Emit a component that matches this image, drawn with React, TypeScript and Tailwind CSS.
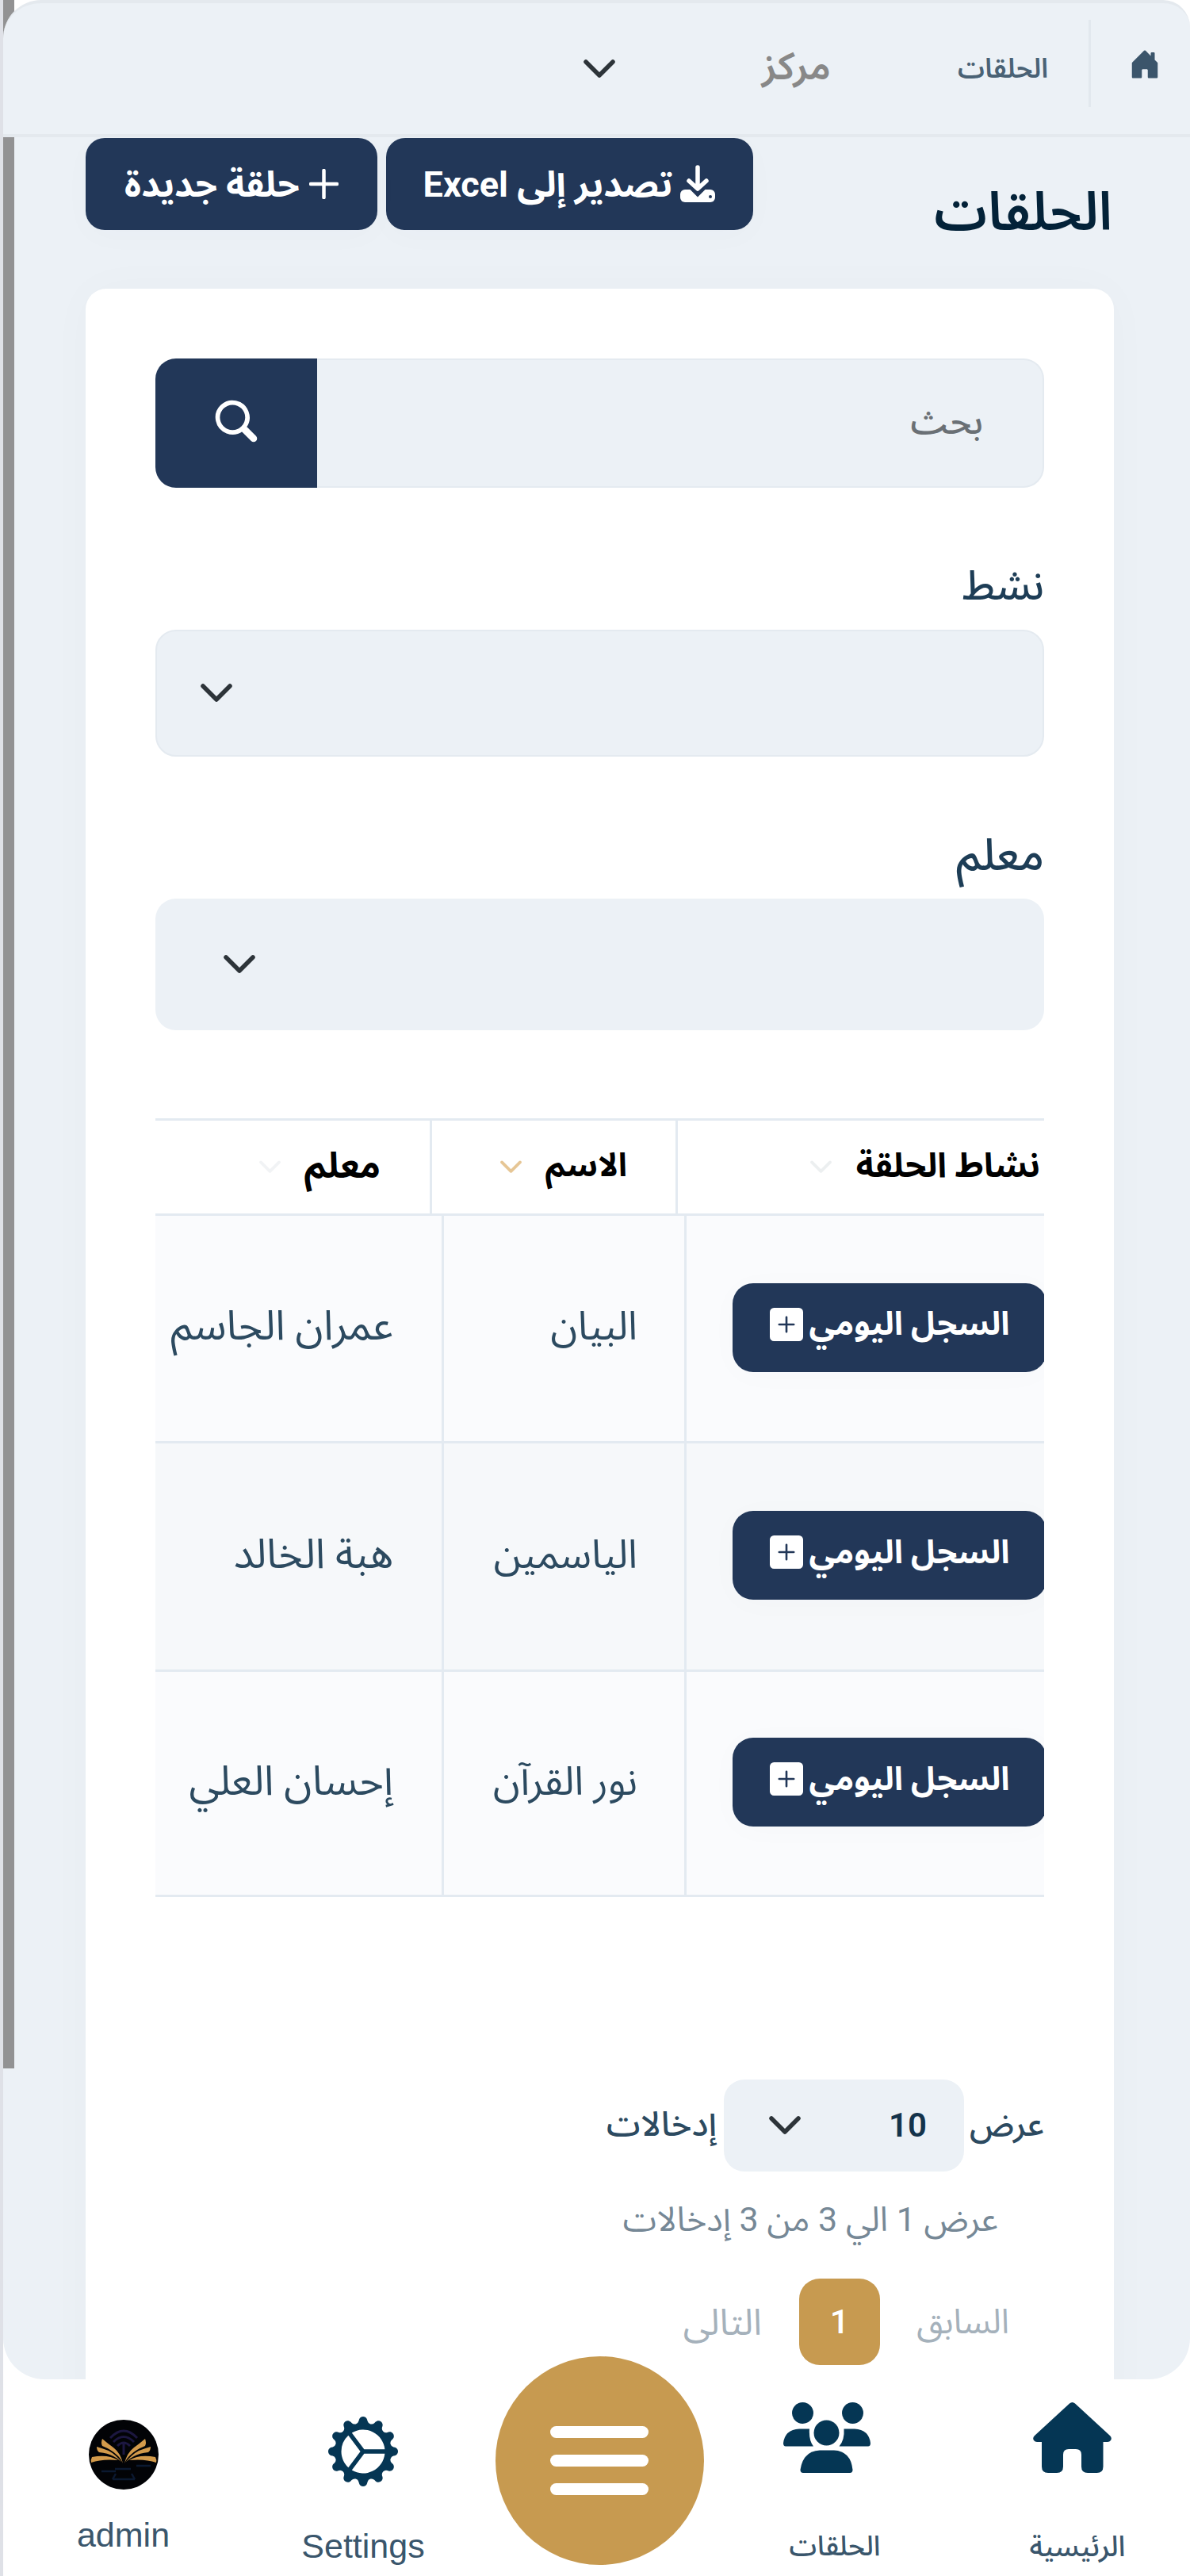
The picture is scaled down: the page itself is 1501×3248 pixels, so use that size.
import React from 'react';
import { BsHouseDoorFill, BsSearch, BsPlusSquareFill, BsGearWideConnected } from 'react-icons/bs';

interface Circle {
  name: string;
  teacher: string;
}

const circles: Circle[] = [
  { name: 'البيان', teacher: 'عمران الجاسم' },
  { name: 'الياسمين', teacher: 'هبة الخالد' },
  { name: 'نور القرآن', teacher: 'إحسان العلي' },
];

const rowStyles = ['h-[287px] bg-[#fafbfd]', 'h-[288px] bg-[#f6f8fa]', 'h-[284px] bg-[#fafbfd]'];

function Chevron({ className = '' }: { className?: string }) {
  return (
    <svg viewBox="0 0 40 24" fill="none" stroke="currentColor" className={className}>
      <path d="M3 3l17 17L37 3" strokeWidth="5.5" strokeLinecap="round" strokeLinejoin="round" />
    </svg>
  );
}

function DownloadIcon() {
  return (
    <svg viewBox="0 0 46 48" className="w-[46px] h-[48px] shrink-0" fill="none" strokeLinecap="round">
      <rect x="1" y="31" width="44" height="16" rx="6" fill="currentColor" />
      <path d="M12 21l11 11 11-11" stroke="#223758" strokeWidth="12" />
      <path d="M23 3v25M12 20l11 10 11-10" stroke="currentColor" strokeWidth="5.500" strokeLinejoin="round" />
      <circle cx="39" cy="40" r="2" fill="#223758" />
    </svg>
  );
}

function PlusIcon() {
  return (
    <svg viewBox="0 0 37 38" className="w-[37px] h-[38px] shrink-0" stroke="currentColor">
      <path d="M18.500 2v34M2 19h33" strokeWidth="4.500" strokeLinecap="round" />
    </svg>
  );
}

function HomeIcon() {
  return (
    <svg viewBox="0 0 99 89" className="w-[99px] h-[89px]" fill="currentColor">
      <path d="M46 1.500q3.500-3 7 0L97 42q3 3 1 6-1.500 2-4 2h-5.500v31q0 8-8 8H69q-8 0-8-8V66q0-7-7-7h-9q-7 0-7 7v15q0 8-8 8H19q-8 0-8-8V50H5q-2.500 0-4-2-2-3 1-6z" />
    </svg>
  );
}

function GroupIcon() {
  return (
    <svg viewBox="0 0 110 89" className="w-[110px] h-[89px]" fill="currentColor">
      <circle cx="24.500" cy="13.500" r="13.500" />
      <circle cx="87.500" cy="13.500" r="13.500" />
      <circle cx="54.500" cy="38.500" r="16" />
      <path d="M20 33.500h13q-1 14 5 22H3q-3 0-3-4 2-17 20-18z" />
      <path d="M90 33.500H76.500q1 14-6 22H107q3 0 3-4-2-17-20-18z" />
      <path d="M46 60.500h18q21 1 23.500 24.500 0 4-3.500 4H25q-3.500 0-3.500-4Q25 61.500 46 60.500z" />
    </svg>
  );
}

function Avatar() {
  return (
    <svg viewBox="0 0 88 88" className="w-[88px] h-[88px]">
      <circle cx="44" cy="44" r="44" fill="#020306" />
      <path d="M27 23q17-18 34 0M31 28q13-13 26 0M36 33q8-8 16 0M44 28v16" stroke="#1c1740" strokeWidth="3" fill="none" />
      {/* Open book pages */}
      <g fill="#d39a4b">
        <path d="M43 55Q40 42 31 35 24 30 17 24q-2 5 0 9 12 5 18 11 5 4 8 11z" />
        <path d="M41 53Q34 44 25 39 17 36 10 34q0 5 3 7 11 1 18 5 6 3 10 7z" />
        <path d="M37 51Q24 43 4 47q-2 4-1 7 14-5 34-3z" />
        <path d="M45 55Q48 42 57 35 64 30 71 24q2 5 0 9-12 5-18 11-5 4-8 11z" />
        <path d="M47 53Q54 44 63 39 71 36 78 34q0 5-3 7-11 1-18 5-6 3-10 7z" />
        <path d="M51 51Q64 43 84 47q2 4 1 7-14-5-34-3z" />
      </g>
      <path d="M16 65h18M60 58h18M33 62h20M30 75h28M34 68l-4 7M54 68l4 7" stroke="#0b1930" strokeWidth="2.500" fill="none" />
    </svg>
  );
}

function Header() {
  return (
    <header className="relative z-10 flex items-center h-[173px] pr-[39px] bg-[#ecf1f6] border-t-4 border-b-4 border-[#e4e9ee] rounded-tl-[48px] rounded-tr-[34px]">
      <BsHouseDoorFill className="w-[40px] h-[42px] -mx-[2px] mb-[12px] text-[#3b556b]" />
      <div className="w-[3px] h-[110px] mr-[50px] mb-[14px] bg-[#e2e8ee]" />
      <span className="w-[112px] mr-[51px] mb-[2px] text-[34px] leading-none font-semibold text-[#4a6275] whitespace-nowrap">الحلقات</span>
      <span className="w-[90px] mr-[162px] mb-[6px] text-[48px] leading-none font-semibold text-[#888] whitespace-nowrap">مركز</span>
      <Chevron className="w-[40px] h-[24px] mr-[182px] text-[#2d3439]" />
    </header>
  );
}

function PageTitle() {
  return (
    <div className="flex items-start justify-between h-[191px] pt-px">
      <h1 className="pt-[53px] pr-[2px] text-[67px] leading-[80px] font-semibold text-[#032238]">الحلقات</h1>
      <div className="flex gap-[11px] text-[45px] leading-none font-bold text-white whitespace-nowrap">
        <button className="flex items-center justify-center gap-[9px] w-[463px] h-[116px] bg-[#223758] rounded-[24px] shadow-[0_8px_40px_rgba(34,55,88,0.02)]">
          <DownloadIcon />
          <span>تصدير إلى Excel</span>
        </button>
        <button className="flex items-center justify-center gap-[12px] w-[368px] h-[116px] bg-[#223758] rounded-[24px] shadow-[0_8px_40px_rgba(34,55,88,0.02)]">
          <PlusIcon />
          <span>حلقة جديدة</span>
        </button>
      </div>
    </div>
  );
}

function Filters() {
  return (
    <div>
      <div className="flex h-[163px]">
        <div className="flex-1 flex items-center pr-[75px] pb-[4px] bg-[#ecf1f6] border-2 border-l-0 border-[#e4eaf0] rounded-r-[26px] text-[45px] leading-none font-medium text-[#6a7075]">
          بحث
        </div>
        <button className="flex items-center justify-center w-[204px] bg-[#223758] rounded-l-[26px] text-white">
          <BsSearch className="w-[50px] h-[50px] mb-[6px] overflow-visible stroke-current [stroke-width:0.8]" />
        </button>
      </div>

      <label className="block mt-[96px] mb-[27px] text-[51px] leading-[56px] font-medium text-[#1d3d56]">نشط</label>
      <div className="flex items-center justify-end h-[160px] pl-[55px] bg-[#ecf1f6] border-2 border-[#e4eaf0] rounded-[26px]">
        <Chevron className="w-[40px] h-[24px] text-[#2d3439]" />
      </div>

      <label className="block mt-[96px] mb-[27px] text-[56px] leading-[56px] font-medium text-[#1d3d56]">معلم</label>
      <div className="flex items-center justify-end h-[166px] pl-[86px] bg-[#ecf1f6] rounded-[26px]">
        <Chevron className="w-[40px] h-[24px] text-[#2d3439]" />
      </div>
    </div>
  );
}

function CirclesTable() {
  return (
    <div className="mt-[111px] overflow-hidden">
      {/* Column heads */}
      <div className="flex h-[123px] border-y-[3px] border-[#e3eaf1] text-[43px] leading-none font-bold text-black whitespace-nowrap">
        <div className="flex items-center w-[465px] pr-[5px] gap-[31px] border-l-[3px] border-[#e3eaf1]">
          <span className="mb-[5px]">نشاط الحلقة</span>
          <Chevron className="w-[27px] h-[17px] text-[#eceff0]" />
        </div>
        <div className="flex items-center w-[310px] pr-[61px] gap-[30px] border-l-[3px] border-[#e3eaf1]">
          <span className="mb-[5px] text-[41px]">الاسم</span>
          <Chevron className="w-[27px] h-[17px] text-[#e6c695]" />
        </div>
        <div className="flex items-center flex-1 pr-[62px] gap-[30px]">
          <span className="mb-[5px] text-[45px]">معلم</span>
          <Chevron className="w-[27px] h-[17px] text-[#f1f3f5]" />
        </div>
      </div>

      {circles.map((circle, index) => (
        <div key={circle.name} className={`flex border-b-[3px] border-[#e3eaf1] whitespace-nowrap leading-none text-[#2c4a60] ${rowStyles[index]}`}>
          <div className="flex items-center w-[454px] pb-[3px] border-l-[3px] border-[#e3eaf1]">
            <button className="flex items-center justify-center gap-[8px] shrink-0 w-[396px] h-[112px] -mr-[3px] pb-[8px] bg-[#223758] rounded-[26px] text-[41px] font-bold text-white shadow-[0_4px_40px_rgba(34,55,88,0.02)]">
              <span>السجل اليومي</span>
              <BsPlusSquareFill className="w-[42px] h-[42px]" />
            </button>
          </div>
          <div className="flex items-center w-[306px] pr-[59px] pb-[6px] border-l-[3px] border-[#e3eaf1] text-[50px]">{circle.name}</div>
          <div className="flex items-center flex-1 pr-[61px] pb-[6px] text-[52px]">{circle.teacher}</div>
        </div>
      ))}
    </div>
  );
}

function TableFooter() {
  return (
    <div className="mt-[230px] text-[43px] leading-none whitespace-nowrap">
      <div className="flex items-center h-[116px] text-[#2c4a60]">
        <span className="w-[90px] mb-[3px] text-[42px] font-medium">عرض</span>
        <div className="flex items-center justify-between w-[303px] h-[116px] mr-[11px] pr-[47px] pl-[57px] bg-[#ecf1f6] rounded-[26px]">
          <span className="text-[42px] font-semibold text-[#14334b]">10</span>
          <Chevron className="w-[40px] h-[24px] text-[#2d3439]" />
        </div>
        <span className="mr-[9px] mb-[3px] font-medium">إدخالات</span>
      </div>

      <div className="mt-[30px] mb-[45px] pr-[58px] leading-[60px] text-[#768896]">عرض 1 الي 3 من 3 إدخالات</div>

      {/* Pagination */}
      <div className="flex items-center pr-[44px] text-[#a5b1bb]">
        <span className="w-[117px]">السابق</span>
        <span className="flex items-center justify-center w-[102px] h-[109px] mr-[46px] bg-[#c79a50] rounded-[26px] font-medium text-white">1</span>
        <span className="mr-[47px] text-[46px]">التالى</span>
      </div>
    </div>
  );
}

function BottomNav() {
  return (
    <nav className="grid grid-cols-[298px_300px_294px_302px_303px] h-[248px] leading-none font-medium text-[#3a566c] whitespace-nowrap">
      <div className="flex flex-col items-center pt-[29px]">
        <span className="text-[#053654]"><HomeIcon /></span>
        <span className="mt-[75px] mr-[-14px] text-[36px]">الرئيسية</span>
      </div>
      <div className="flex flex-col items-center pt-[29px] pr-[20px]">
        <span className="text-[#053654]"><GroupIcon /></span>
        <span className="mt-[75px] mr-[-20px] text-[35px]">الحلقات</span>
      </div>
      <div className="flex justify-center">
        <button className="relative z-10 flex flex-col items-center justify-center gap-[21px] shrink-0 w-[263px] h-[263px] -mt-[29px] bg-[#c79a50] rounded-full">
          <span className="w-[124px] h-[15px] bg-white rounded-full" />
          <span className="w-[124px] h-[15px] bg-white rounded-full" />
          <span className="w-[124px] h-[15px] bg-white rounded-full" />
        </button>
      </div>
      <div className="flex flex-col items-center pt-[47px] font-['Liberation_Sans'] font-normal">
        <BsGearWideConnected className="w-[88px] h-[88px] text-[#053654]" />
        <span className="mt-[54px] text-[43px]">Settings</span>
      </div>
      <div className="flex flex-col items-center pt-[51px] font-['Liberation_Sans'] font-normal">
        <Avatar />
        <span className="mt-[36px] text-[43px]">admin</span>
      </div>
    </nav>
  );
}

function App() {
  return (
    <div
      dir="rtl"
      className="relative w-[1501px] h-[3248px] overflow-hidden bg-white border-l-4 border-[#dfe1e7] font-[Roboto,'Noto_Sans_Arabic',sans-serif]"
    >
      {/* Scroll thumb */}
      <div className="absolute left-0 top-0 z-[5] w-[14px] h-[2608px] bg-[#929293]" />

      <Header />
      <main className="h-[2827px] pr-[96px] pl-[104px] overflow-hidden bg-[#ecf1f6] rounded-b-[52px]">
        <PageTitle />
        <section className="h-[2700px] px-[88px] pt-[88px] bg-white rounded-[26px] shadow-[0_0_60px_rgba(34,55,88,0.025)]">
          <Filters />
          <CirclesTable />
          <TableFooter />
        </section>
      </main>
      <BottomNav />
    </div>
  );
}

export default App;
